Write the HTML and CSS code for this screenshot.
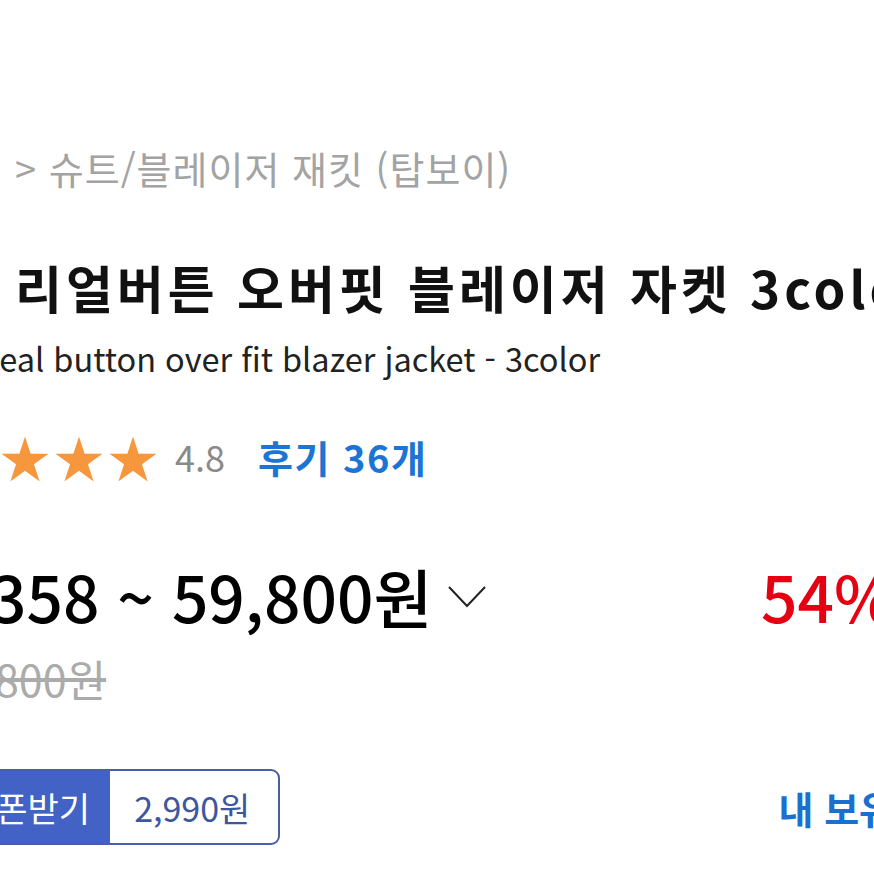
FILE: index.html
```html
<!DOCTYPE html>
<html lang="ko">
<head>
    <meta charset="UTF-8">
    <meta name="viewport" content="width=device-width, initial-scale=1.0">
    <title>리얼버튼 오버핏 블레이저 자켓</title>
    <link rel="stylesheet" href="styles.css">
</head>
<body>
    <div class="product-info">
        <!-- 카테고리 -->
        <div class="breadcrumb">&gt; 슈트/블레이저 재킷 (탑보이)</div>

        <!-- 상품명 -->
        <h1 class="title">리얼버튼 오버핏 블레이저 자켓 3color</h1>
        <p class="subtitle">real button over fit blazer jacket - 3color</p>

        <!-- 별점 -->
        <div class="rating">
            <div class="stars">
                <span class="star">★</span><span class="star">★</span><span class="star">★</span><span class="star">★</span><span class="star">★</span>
            </div>
            <span class="score">4.8</span>
            <a class="review-link" href="#">후기 36개</a>
        </div>

        <!-- 가격 -->
        <div class="price-row">
            <div class="price">
                <span class="price-value">358 ~ 59,800원</span>
                <svg class="chevron" width="38" height="22" viewBox="0 0 38 22">
                    <polyline points="1,1 19,20 37,1" fill="none" stroke="#222" stroke-width="2"/>
                </svg>
            </div>
            <span class="discount">54%</span>
        </div>
        <div class="old-price">800원</div>

        <!-- 쿠폰 -->
        <div class="coupon-row">
            <div class="coupon">
                <span class="coupon-label">쿠폰받기</span>
                <span class="coupon-amount">2,990원</span>
            </div>
            <a class="my-coupon" href="#">내 보유쿠폰</a>
        </div>
    </div>
</body>
</html>
```

FILE: styles.css
```css
html, body {
    margin: 0;
    padding: 0;
    background: #fff;
    overflow: hidden;
}

body {
    font-family: "Noto Sans CJK KR", "Noto Sans", sans-serif;
    color: #111;
    width: 874px;
    height: 874px;
}

.product-info {
    padding-top: 143px;
    padding-left: 15px;
}

.breadcrumb {
    font-size: 38px;
    line-height: 50px;
    letter-spacing: 1px;
    color: #a3a3a3;
    white-space: nowrap;
}

.title {
    margin: 62px 0 0;
    font-size: 51px;
    line-height: 64px;
    font-weight: 700;
    letter-spacing: 4px;
    color: #111;
    white-space: nowrap;
}

.subtitle {
    margin: 17px 0 0 -28px;
    font-size: 32.5px;
    line-height: 44px;
    color: #222;
    white-space: nowrap;
}

.rating {
    display: flex;
    align-items: center;
    height: 50px;
    margin-top: 51px;
    margin-left: -123px;
}

.stars {
    display: flex;
    gap: 4px;
}

.star {
    font-size: 50px;
    line-height: 50px;
    color: #f7973d;
}

.score {
    margin-left: 17px;
    font-size: 36px;
    color: #8a8a8a;
}

.review-link {
    margin-left: 33px;
    font-size: 38px;
    font-weight: 700;
    letter-spacing: 1.5px;
    color: #1c74d4;
    text-decoration: none;
}

.price-row {
    display: flex;
    justify-content: space-between;
    align-items: center;
    margin-top: 74px;
    margin-left: -25px;
    margin-right: -20px;
    height: 80px;
}

.price {
    display: flex;
    align-items: center;
    gap: 16px;
}

.price-value {
    font-size: 64px;
    font-weight: 500;
    color: #000;
    white-space: nowrap;
}

.chevron {
    margin-top: 4px;
}

.discount {
    font-size: 64px;
    font-weight: 500;
    color: #e50012;
}

.old-price {
    margin-top: 18px;
    margin-left: -20px;
    font-size: 43px;
    line-height: 50px;
    color: #ababab;
    text-decoration: line-through;
}

.coupon-row {
    display: flex;
    justify-content: space-between;
    align-items: center;
    margin-top: 66px;
    margin-left: -72px;
    margin-right: -90px;
}

.coupon {
    display: flex;
    height: 76px;
    border: 2px solid #4a5ea8;
    border-radius: 0 9px 9px 0;
    overflow: hidden;
    box-sizing: border-box;
}

.coupon-label {
    display: flex;
    align-items: center;
    padding: 0 20px 0 20px;
    background: #4262c6;
    color: #fff;
    font-size: 34px;
}

.coupon-amount {
    display: flex;
    align-items: center;
    padding: 0 28px 0 24px;
    color: #3d56a0;
    font-size: 34px;
}

.my-coupon {
    font-size: 38px;
    font-weight: 700;
    color: #1a6fd1;
    text-decoration: none;
    white-space: nowrap;
}
```
